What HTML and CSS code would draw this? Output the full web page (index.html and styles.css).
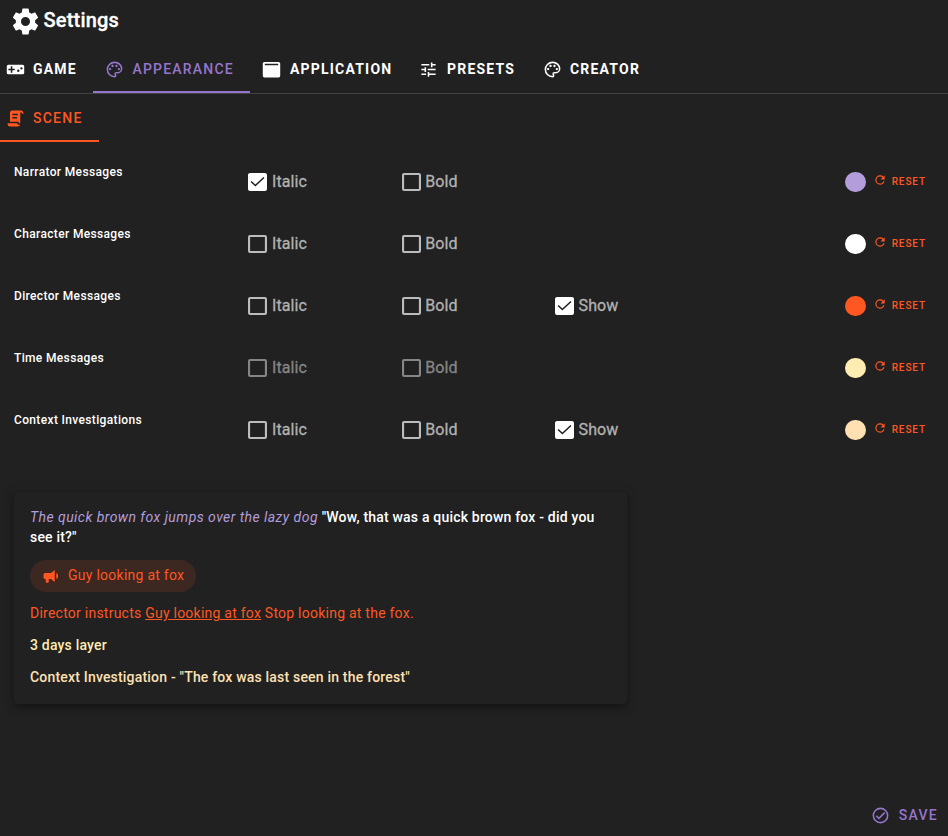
FILE: index.html
```html
<!DOCTYPE html>
<html lang="en">
<head>
<meta charset="utf-8">
<title>Settings</title>
<link rel="stylesheet" href="styles.css">
</head>
<body>
<svg class="defs" aria-hidden="true">
  <symbol id="cog" viewBox="0 0 24 24"><path d="M12,15.5A3.5,3.5 0 0,1 8.5,12A3.5,3.5 0 0,1 12,8.5A3.5,3.5 0 0,1 15.5,12A3.5,3.5 0 0,1 12,15.5M19.43,12.97C19.47,12.65 19.5,12.33 19.5,12C19.5,11.67 19.47,11.34 19.43,11L21.54,9.37C21.73,9.22 21.78,8.95 21.66,8.73L19.66,5.27C19.54,5.05 19.27,4.96 19.05,5.05L16.56,6.05C16.04,5.66 15.5,5.32 14.87,5.07L14.5,2.42C14.46,2.18 14.25,2 14,2H10C9.75,2 9.54,2.18 9.5,2.42L9.13,5.07C8.5,5.32 7.96,5.66 7.44,6.05L4.95,5.05C4.73,4.96 4.46,5.05 4.34,5.27L2.34,8.73C2.21,8.95 2.27,9.22 2.46,9.37L4.57,11C4.53,11.34 4.5,11.67 4.5,12C4.5,12.33 4.53,12.65 4.57,12.97L2.46,14.63C2.27,14.78 2.21,15.05 2.34,15.27L4.34,18.73C4.46,18.95 4.73,19.03 4.95,18.95L7.44,17.94C7.96,18.34 8.5,18.68 9.13,18.93L9.5,21.58C9.54,21.82 9.75,22 10,22H14C14.25,22 14.46,21.82 14.5,21.58L14.87,18.93C15.5,18.67 16.04,18.34 16.56,17.94L19.05,18.95C19.27,19.03 19.54,18.95 19.66,18.73L21.66,15.27C21.78,15.05 21.73,14.78 21.54,14.63L19.43,12.97Z"/></symbol>
  <symbol id="gamepad" viewBox="0 0 24 24"><path fill-rule="evenodd" d="M21,6H3A2,2 0 0,0 1,8V16A2,2 0 0,0 3,18H21A2,2 0 0,0 23,16V8A2,2 0 0,0 21,6M11,13H8V16H6V13H3V11H6V8H8V11H11V13M15.5,15A1.5,1.5 0 0,1 14,13.5A1.5,1.5 0 0,1 15.5,12A1.5,1.5 0 0,1 17,13.5A1.5,1.5 0 0,1 15.5,15M19.5,12A1.5,1.5 0 0,1 18,10.5A1.5,1.5 0 0,1 19.5,9A1.5,1.5 0 0,1 21,10.5A1.5,1.5 0 0,1 19.5,12Z"/></symbol>
  <symbol id="palette" viewBox="0 0 24 24"><path d="M12,22A10,10 0 0,1 2,12A10,10 0 0,1 12,2C17.5,2 22,6 22,11A6,6 0 0,1 16,17H14.2C13.9,17 13.7,17.2 13.7,17.5C13.7,17.6 13.8,17.7 13.8,17.8C14.2,18.3 14.4,18.9 14.4,19.5C14.5,20.9 13.4,22 12,22M12,4A8,8 0 0,0 4,12A8,8 0 0,0 12,20C12.3,20 12.5,19.8 12.5,19.5C12.5,19.3 12.4,19.2 12.4,19.1C12,18.6 11.8,18.1 11.8,17.5C11.8,16.1 12.9,15 14.3,15H16A4,4 0 0,0 20,11C20,7.1 16.4,4 12,4M6.5,10C7.3,10 8,10.7 8,11.5C8,12.3 7.3,13 6.5,13C5.7,13 5,12.3 5,11.5C5,10.7 5.7,10 6.5,10M9.5,6C10.3,6 11,6.7 11,7.5C11,8.3 10.3,9 9.5,9C8.7,9 8,8.3 8,7.5C8,6.7 8.7,6 9.5,6M14.5,6C15.3,6 16,6.7 16,7.5C16,8.3 15.3,9 14.5,9C13.7,9 13,8.3 13,7.5C13,6.7 13.7,6 14.5,6M17.5,10C18.3,10 19,10.7 19,11.5C19,12.3 18.3,13 17.5,13C16.7,13 16,12.3 16,11.5C16,10.7 16.7,10 17.5,10Z"/></symbol>
  <symbol id="window" viewBox="0 0 24 24"><path fill-rule="evenodd" d="M3,2.5H21A2,2 0 0,1 23,4.5V20A2,2 0 0,1 21,22H3A2,2 0 0,1 1,20V4.5A2,2 0 0,1 3,2.5M3.5,4.8V6.7H20.5V4.8Z"/></symbol>
  <symbol id="tune" viewBox="0 0 24 24"><path d="M3,17V19H9V17H3M3,5V7H13V5H3M13,21V19H21V17H13V15H11V21H13M7,9V11H3V13H7V15H9V9H7M21,13V11H11V13H21M15,9H17V7H21V5H17V3H15V9Z"/></symbol>
  <symbol id="script" viewBox="0 0 24 24"><path d="M17.8,20C17.4,21.2 16.3,22 15,22H5C3.3,22 2,20.7 2,19V18H5L14.2,18C14.6,19.2 15.7,20 17,20H17.8M19,2C20.7,2 22,3.3 22,5V6H20V5C20,4.4 19.6,4 19,4C18.4,4 18,4.4 18,5V18H17C16.4,18 16,17.6 16,17V16H5V5C5,3.3 6.3,2 8,2H19M8,6V8H15V6H8M8,10V12H14V10H8Z"/></symbol>
  <symbol id="box-off" viewBox="3 3 18 18" preserveAspectRatio="none"><path d="M19,3H5A2,2 0 0,0 3,5V19A2,2 0 0,0 5,21H19A2,2 0 0,0 21,19V5A2,2 0 0,0 19,3M19,5V19H5V5H19Z"/></symbol>
  <symbol id="box-on" viewBox="3 3 18 18" preserveAspectRatio="none"><path d="M10,16.6L5.4,12L6.4,11L10,14.6L17.6,7L18.6,8M19,3H5C3.89,3 3,3.89 3,5V19A2,2 0 0,0 5,21H19A2,2 0 0,0 21,19V5C21,3.89 20.1,3 19,3Z"/></symbol>
  <symbol id="refresh" viewBox="0 0 24 24"><path d="M17.65,6.35C16.2,4.9 14.21,4 12,4A8,8 0 0,0 4,12A8,8 0 0,0 12,20C15.73,20 18.84,17.45 19.73,14H17.65C16.83,16.33 14.61,18 12,18A6,6 0 0,1 6,12A6,6 0 0,1 12,6C13.66,6 15.14,6.69 16.22,7.78L13,11H20V4L17.65,6.35Z"/></symbol>
  <symbol id="bullhorn" viewBox="0 0 24 24"><path d="M12,8H4A2,2 0 0,0 2,10V14A2,2 0 0,0 4,16H5V20A1,1 0 0,0 6,21H8A1,1 0 0,0 9,20V16H12L17,20V4L12,8M21.5,12C21.5,13.71 20.54,15.26 19,16V8C20.53,8.75 21.5,10.3 21.5,12Z"/></symbol>
  <symbol id="check-round" viewBox="0 0 24 24"><path d="M12,2A10,10 0 0,0 2,12A10,10 0 0,0 12,22A10,10 0 0,0 22,12A10,10 0 0,0 12,2M12,20C7.59,20 4,16.41 4,12C4,7.59 7.59,4 12,4C16.41,4 20,7.59 20,12C20,16.41 16.41,20 12,20M16.59,7.58L10,14.17L7.41,11.59L6,13L10,17L18,9L16.59,7.58Z"/></symbol>
</svg>

<header class="header">
  <svg class="header-icon"><use href="#cog"/></svg>
  <h1 class="title">Settings</h1>
</header>

<nav class="tabs">
  <div class="tab tab-game"><svg class="icon"><use href="#gamepad"/></svg><span>GAME</span></div>
  <div class="tab tab-appearance active"><svg class="icon"><use href="#palette"/></svg><span>APPEARANCE</span></div>
  <div class="tab tab-application"><svg class="icon"><use href="#window"/></svg><span>APPLICATION</span></div>
  <div class="tab tab-presets"><svg class="icon"><use href="#tune"/></svg><span>PRESETS</span></div>
  <div class="tab tab-creator"><svg class="icon"><use href="#palette"/></svg><span>CREATOR</span></div>
</nav>

<nav class="subtabs">
  <div class="subtab"><svg class="icon"><use href="#script"/></svg><span>SCENE</span></div>
</nav>

<main class="rows">
  <div class="row">
    <div class="name">Narrator Messages</div>
    <label class="check"><svg class="box on"><use href="#box-on"/></svg><span>Italic</span></label>
    <label class="check"><svg class="box"><use href="#box-off"/></svg><span>Bold</span></label>
    <div></div>
    <div class="color"><span class="dot narrator"></span><button class="reset"><svg class="reset-icon"><use href="#refresh"/></svg><span>RESET</span></button></div>
  </div>
  <div class="row">
    <div class="name">Character Messages</div>
    <label class="check"><svg class="box"><use href="#box-off"/></svg><span>Italic</span></label>
    <label class="check"><svg class="box"><use href="#box-off"/></svg><span>Bold</span></label>
    <div></div>
    <div class="color"><span class="dot character"></span><button class="reset"><svg class="reset-icon"><use href="#refresh"/></svg><span>RESET</span></button></div>
  </div>
  <div class="row">
    <div class="name">Director Messages</div>
    <label class="check"><svg class="box"><use href="#box-off"/></svg><span>Italic</span></label>
    <label class="check"><svg class="box"><use href="#box-off"/></svg><span>Bold</span></label>
    <label class="check"><svg class="box on"><use href="#box-on"/></svg><span>Show</span></label>
    <div class="color"><span class="dot director"></span><button class="reset"><svg class="reset-icon"><use href="#refresh"/></svg><span>RESET</span></button></div>
  </div>
  <div class="row">
    <div class="name">Time Messages</div>
    <label class="check disabled"><svg class="box"><use href="#box-off"/></svg><span>Italic</span></label>
    <label class="check disabled"><svg class="box"><use href="#box-off"/></svg><span>Bold</span></label>
    <div></div>
    <div class="color"><span class="dot time"></span><button class="reset"><svg class="reset-icon"><use href="#refresh"/></svg><span>RESET</span></button></div>
  </div>
  <div class="row">
    <div class="name">Context Investigations</div>
    <label class="check"><svg class="box"><use href="#box-off"/></svg><span>Italic</span></label>
    <label class="check"><svg class="box"><use href="#box-off"/></svg><span>Bold</span></label>
    <label class="check"><svg class="box on"><use href="#box-on"/></svg><span>Show</span></label>
    <div class="color"><span class="dot context"></span><button class="reset"><svg class="reset-icon"><use href="#refresh"/></svg><span>RESET</span></button></div>
  </div>
</main>

<section class="card">
  <p class="line"><em class="narration">The quick brown fox jumps over the lazy dog</em> <span>"Wow, that was a quick brown fox - did you see it?"</span></p>
  <div class="chip"><svg class="chip-icon"><use href="#bullhorn"/></svg><span>Guy looking at fox</span></div>
  <p class="line instruct">Director instructs <u>Guy looking at fox</u> Stop looking at the fox.</p>
  <p class="line time-text">3 days layer</p>
  <p class="line context-text">Context Investigation - "The fox was last seen in the forest"</p>
</section>

<footer class="footer">
  <button class="save"><svg class="icon"><use href="#check-round"/></svg><span>SAVE</span></button>
</footer>
</body>
</html>
```
FILE: styles.css
```css
* { box-sizing: border-box; }
body {
  margin: 0;
  height: 836px;
  overflow: hidden;
  display: flex;
  flex-direction: column;
  background: #212121;
  color: #fff;
  font-family: Roboto, "Liberation Sans", sans-serif;
}
svg { fill: currentColor; flex: none; display: block; }
button { border: 0; padding: 0; background: none; font: inherit; color: inherit; }
.defs { display: none; }
.icon { width: 19px; height: 19px; }

.header { display: flex; align-items: center; height: 45px; padding: 0 0 2px 9.5px; gap: 3px; }
.header-icon { width: 31px; height: 31px; }
.title { margin: 0 0 4px; font-size: 20px; font-weight: 500; line-height: 32px; letter-spacing: 0.2px; -webkit-text-stroke: 0.3px; }

.tabs { display: flex; height: 49px; border-bottom: 1px solid #424242; }
.tab, .subtab {
  display: flex;
  align-items: center;
  gap: 9px;
  height: 48px;
  border-bottom: 2px solid transparent;
  font-size: 14px;
  font-weight: 500;
  letter-spacing: 1.25px;
  padding-top: 2px;
}
.tab { padding-left: 12px; font-weight: 700; letter-spacing: 1.2px; }
.tab-game { width: 93px; padding-left: 5.5px; gap: 8.5px; }
.tab-appearance { width: 157px; gap: 8.5px; }
.tab-application { width: 157px; }
.tab-presets { width: 123px; }
.tab-creator { padding-left: 12.5px; gap: 8.5px; }
.tab.active { font-weight: 500; color: #9575cd; border-color: #9575cd; }

.subtabs { height: 48px; display: flex; color: #ff5722; }
.subtab { width: 99px; padding-left: 5.5px; gap: 8.5px; border-color: #ff5722; }

.rows { padding: 20px 14px 0; height: 350px; }
.row { display: grid; grid-template-columns: 234.4px 153.3px 153.3px 1fr auto; height: 62px; }
.name { font-size: 12px; line-height: 20px; font-weight: 500; letter-spacing: 0.35px; }
.check { display: flex; align-items: center; gap: 4.6px; height: 40px; font-size: 16px; letter-spacing: 0.1px; color: #b2b2b2; }
.check.disabled { color: #868686; }
.check span { margin-bottom: 1px; -webkit-text-stroke: 0.3px; }
.box { width: 19px; height: 18px; color: #bcbcbc; }
.box.on { color: #fff; }
.disabled .box { color: #868686; }
.color { display: flex; align-items: center; height: 40px; padding-right: 8px; }
.dot { width: 20.5px; height: 20.5px; border-radius: 50%; }
.narrator { background: #b39ddb; }
.character { background: #fff; }
.director { background: #ff5722; }
.time { background: #ffecb3; }
.context { background: #ffe0b2; }
.reset { display: flex; align-items: center; gap: 5px; margin: 0 0 2px 7px; color: #ff5722; font-size: 10px; font-weight: 500; letter-spacing: 0.9px; }
.reset-icon { width: 14px; height: 14px; margin-bottom: 2px; }

.card {
  width: 613px;
  height: 212px;
  margin-left: 14px;
  padding: 15px 16px;
  border-radius: 4px;
  background: #212121;
  box-shadow: 0 3px 5px -1px rgba(0,0,0,.2), 0 5px 8px rgba(0,0,0,.14), 0 1px 14px rgba(0,0,0,.12);
  font-size: 14px;
  line-height: 20px;
  font-weight: 500;
  letter-spacing: 0.19px;
}
.line { margin: 0 0 12px; }
.narration { color: #b39ddb; font-weight: 400; letter-spacing: 0.45px; }
.chip { display: flex; width: 166px; height: 32px; align-items: center; gap: 8px; margin: 13px 0 11px; padding-left: 12px; border-radius: 16px; background: #3c2721; color: #ff5722; font-weight: 400; letter-spacing: 0.26px; }
.chip span { margin-bottom: 2px; }
.chip-icon { width: 18px; height: 18px; }
.instruct { color: #ff5722; font-weight: 400; letter-spacing: 0.24px; }
.time-text { color: #ffecb3; }
.context-text { color: #ffe0b2; }

.footer { margin-top: auto; display: flex; justify-content: flex-end; padding: 0 10px 11px 0; color: #9575cd; }
.save { display: flex; align-items: center; gap: 9px; font-size: 14px; font-weight: 500; letter-spacing: 1.25px; }
.save span { margin-bottom: 2px; }
```
